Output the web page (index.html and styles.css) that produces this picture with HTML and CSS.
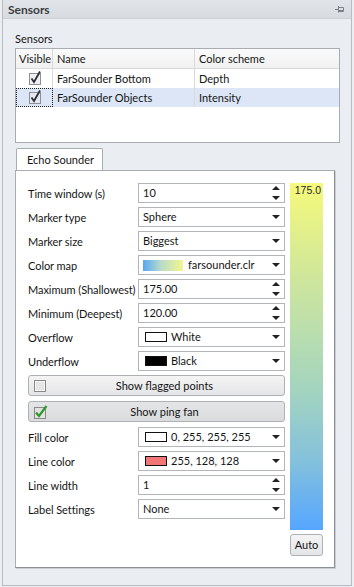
FILE: index.html
```html
<!DOCTYPE html>
<html lang="en">
<head>
	<meta charset="UTF-8">
	<title>Sensors</title>
	<link rel="stylesheet" href="styles.css">
</head>
<body>
	<div class="panel">
		<div class="panel-head">
			<span class="panel-title">Sensors</span>
			<svg class="pin" width="9" height="8" viewBox="0 0 9 8">
				<path d="M0 4.5H3M3.5 1V7.5M3.5 2.5H8.5V6.5H3.5M3.5 5.5H8.5" stroke="#7a7f88" stroke-width="1" fill="none"/>
			</svg>
		</div>
		<div class="panel-body">
			<div class="group-label">Sensors</div>
			<div class="grid">
				<div class="grid-row grid-head">
					<div class="c1">Visible</div>
					<div class="c2">Name</div>
					<div class="c3">Color scheme</div>
				</div>
				<div class="grid-row">
					<div class="c1">
						<svg class="chk" width="16" height="16" viewBox="0 0 16 16">
							<rect x="2.5" y="3.5" width="11" height="11" fill="#eef0f4" stroke="#8d9096"/>
							<path d="M4.5 8.5L7 12L13 1.5" stroke="#2f2f33" stroke-width="1.8" fill="none"/>
						</svg>
					</div>
					<div class="c2">FarSounder Bottom</div>
					<div class="c3">Depth</div>
				</div>
				<div class="grid-row selected">
					<div class="c1 focus">
						<svg class="chk" width="16" height="16" viewBox="0 0 16 16">
							<rect x="2.5" y="3.5" width="11" height="11" fill="#e2e7f2" stroke="#8d9096"/>
							<path d="M4.5 8.5L7 12L13 1.5" stroke="#2f2f33" stroke-width="1.8" fill="none"/>
						</svg>
					</div>
					<div class="c2">FarSounder Objects</div>
					<div class="c3">Intensity</div>
				</div>
			</div>

			<div class="tabs">
				<div class="tab">Echo Sounder</div>
				<div class="tab-page">
					<div class="form">
						<div class="field">
							<label>Time window (s)</label>
							<div class="input spin">10</div>
						</div>
						<div class="field">
							<label>Marker type</label>
							<div class="input drop">Sphere</div>
						</div>
						<div class="field">
							<label>Marker size</label>
							<div class="input drop">Biggest</div>
						</div>
						<div class="field">
							<label>Color map</label>
							<div class="input drop"><span class="ramp"></span>farsounder.clr</div>
						</div>
						<div class="field">
							<label>Maximum (Shallowest)</label>
							<div class="input spin">175.00</div>
						</div>
						<div class="field">
							<label>Minimum (Deepest)</label>
							<div class="input spin">120.00</div>
						</div>
						<div class="field">
							<label>Overflow</label>
							<div class="input drop"><span class="swatch"></span>White</div>
						</div>
						<div class="field">
							<label>Underflow</label>
							<div class="input drop"><span class="swatch black"></span>Black</div>
						</div>
						<div class="btn first">
							<svg class="btn-chk" width="16" height="14" viewBox="0 0 16 14">
								<rect x="1.5" y="1.5" width="11" height="11" fill="#e6e6e6" stroke="#8a8a8a"/>
								<rect x="2.5" y="2.5" width="9" height="9" fill="none" stroke="#f6f6f6"/>
							</svg>
							<span>Show flagged points</span>
						</div>
						<div class="btn checked">
							<svg class="btn-chk" width="16" height="14" viewBox="0 0 16 14">
								<rect x="1.5" y="2.5" width="11" height="11" fill="#e2e2e2" stroke="#8a8a8a"/>
								<path d="M3 7.5L6 11L13.5 1" stroke="#2c9a2c" stroke-width="2.2" fill="none"/>
							</svg>
							<span>Show ping fan</span>
						</div>
						<div class="field">
							<label>Fill color</label>
							<div class="input drop"><span class="swatch"></span>0, 255, 255, 255</div>
						</div>
						<div class="field">
							<label>Line color</label>
							<div class="input drop"><span class="swatch red"></span>255, 128, 128</div>
						</div>
						<div class="field">
							<label>Line width</label>
							<div class="input spin">1</div>
						</div>
						<div class="field">
							<label>Label Settings</label>
							<div class="input drop">None</div>
						</div>
					</div>
					<div class="scale">
						<div class="bar"><span>175.0</span></div>
						<div class="auto">Auto</div>
					</div>
				</div>
			</div>
		</div>
	</div>
</body>
</html>
```

FILE: styles.css
```css
body {
	margin: 0;
	background-color: #eceef1;
	font-family: Lato, 'Noto Sans', sans-serif;
	font-size: 11px;
	color: #151515;
}

.panel {
	width: 348px;
	height: 585px;
	margin: 0 2px 0 2px;
	border: 1px solid #b8bcc3;
	border-top: none;
	background-color: #eaedf1;
}

.panel-head {
	height: 18px;
	display: flex;
	align-items: center;
	justify-content: space-between;
	padding: 0 7px 0 5px;
	background: linear-gradient(#e1e4e8, #d8dbe0);
	border-bottom: 1px solid #cdd1d6;
}

.panel-title {
	font-weight: bold;
	font-size: 12px;
	color: #3a3d42;
}

.pin {
	display: block;
}

.panel-body {
	padding: 12px 0 0 12px;
}

.group-label {
	height: 17px;
	line-height: 16px;
}

/* sensor list */
.grid {
	width: 323px;
	height: 93px;
	border: 1px solid #a9acb2;
	background-color: #fff;
}

.grid-row {
	display: flex;
	height: 19px;
	line-height: 19px;
}

.grid-head {
	height: 19px;
	background: linear-gradient(#fafafa, #f1f1f1);
	border-bottom: 1px solid #dadada;
}

.grid-row .c1 {
	width: 36px;
	text-align: center;
	border-right: 1px solid #dadada;
}

.grid-row .c2 {
	width: 137px;
	padding-left: 4px;
	border-right: 1px solid #dadada;
}

.grid-row .c3 {
	padding-left: 4px;
}

.grid-head .c1 {
	text-align: left;
	padding-left: 3px;
	width: 33px;
}

.grid-row.selected {
	background-color: #dce6f6;
}

.c1 .chk {
	display: block;
	margin: 1px auto 0;
	position: relative;
	left: 1px;
}

.c1.focus {
	outline: 1px dotted #222;
	outline-offset: -1px;
}

/* tab */
.tabs {
	margin-top: 5px;
}

.tab {
	width: 87px;
	height: 22px;
	margin-left: 1px;
	box-sizing: border-box;
	line-height: 21px;
	padding-left: 10px;
	white-space: nowrap;
	background-color: #fff;
	border: 1px solid #a9acb2;
	border-bottom: none;
	border-radius: 2px 2px 0 0;
}

.tab-page {
	width: 306px;
	height: 384px;
	padding: 12px 0 0 12px;
	border: 1px solid #a9acb2;
	border-right-color: #8c9097;
	border-bottom-color: #8c9097;
	box-shadow: 1px 1px 0 #c9ccd1;
	background-color: #fff;
	display: flex;
	gap: 5px;
}

.form {
	width: 257px;
}

.field {
	display: flex;
	align-items: center;
	height: 20px;
	margin-bottom: 4px;
}

.field label {
	width: 110px;
	flex-shrink: 0;
	white-space: nowrap;
	letter-spacing: -0.05px;
}

.input {
	flex: 1;
	height: 18px;
	line-height: 18px;
	border: 1px solid #b2b5ba;
	padding-left: 4px;
	display: flex;
	align-items: center;
	position: relative;
}

.drop::after {
	content: '';
	position: absolute;
	right: 4px;
	top: 7px;
	border-left: 4px solid transparent;
	border-right: 4px solid transparent;
	border-top: 4px solid #222;
}

.spin::before,
.spin::after {
	content: '';
	position: absolute;
	right: 4px;
	border-left: 4px solid transparent;
	border-right: 4px solid transparent;
}

.spin::before {
	top: 2px;
	border-bottom: 4px solid #222;
}

.spin::after {
	bottom: 2px;
	border-top: 4px solid #222;
}

.ramp {
	width: 40px;
	height: 11px;
	margin-right: 5px;
	background: linear-gradient(to right, #55a7f5, #b9dcc8 45%, #f3f58f);
}

.swatch {
	width: 20px;
	height: 8px;
	border: 1px solid #111;
	background-color: #fff;
	margin: 0 4px 0 2px;
}

.swatch.black {
	background-color: #000;
}

.swatch.red {
	background-color: #f27676;
}

.btn {
	height: 19px;
	border: 1px solid #adb0b5;
	border-radius: 3px;
	background: linear-gradient(#f4f4f4, #e4e5e7);
	display: flex;
	align-items: center;
	margin-bottom: 5px;
}

.btn.first {
	margin-top: 2px;
}

.btn.checked {
	background: linear-gradient(#e4e5e7, #dadbdd);
}

.btn-chk {
	margin-left: 4px;
	flex-shrink: 0;
}

.btn span {
	flex: 1;
	text-align: center;
	padding-right: 4px;
}

/* colour scale */
.scale {
	width: 33px;
	display: flex;
	flex-direction: column;
}

.bar {
	height: 347px;
	background: linear-gradient(#f6f97a, #cbe59f 30%, #a3d4c0 60%, #84c1dc 80%, #55a6ff);
	text-align: right;
	font-family: 'Liberation Sans', sans-serif;
	font-size: 10.5px;
	line-height: 14px;
	padding-right: 2px;
	color: #2a2a2a;
}

.auto {
	margin-top: 4px;
	height: 20px;
	line-height: 20px;
	text-align: center;
	border: 1px solid #adb0b5;
	border-radius: 3px;
	background: linear-gradient(#f4f4f4, #e4e5e7);
}
```
